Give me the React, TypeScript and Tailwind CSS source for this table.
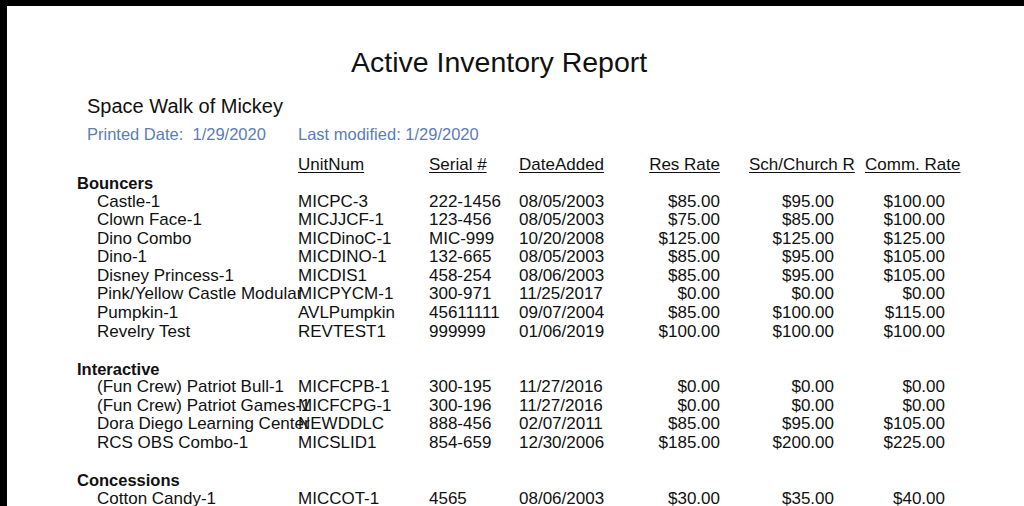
import React from "react";

type Row = [string, string, string, string, string, string, string];

const groups: { name: string; rows: Row[] }[] = [
  {
    name: "Bouncers",
    rows: [
      ["Castle-1", "MICPC-3", "222-1456", "08/05/2003", "$85.00", "$95.00", "$100.00"],
      ["Clown Face-1", "MICJJCF-1", "123-456", "08/05/2003", "$75.00", "$85.00", "$100.00"],
      ["Dino Combo", "MICDinoC-1", "MIC-999", "10/20/2008", "$125.00", "$125.00", "$125.00"],
      ["Dino-1", "MICDINO-1", "132-665", "08/05/2003", "$85.00", "$95.00", "$105.00"],
      ["Disney Princess-1", "MICDIS1", "458-254", "08/06/2003", "$85.00", "$95.00", "$105.00"],
      ["Pink/Yellow Castle Modular", "MICPYCM-1", "300-971", "11/25/2017", "$0.00", "$0.00", "$0.00"],
      ["Pumpkin-1", "AVLPumpkin", "45611111", "09/07/2004", "$85.00", "$100.00", "$115.00"],
      ["Revelry Test", "REVTEST1", "999999", "01/06/2019", "$100.00", "$100.00", "$100.00"],
    ],
  },
  {
    name: "Interactive",
    rows: [
      ["(Fun Crew) Patriot Bull-1", "MICFCPB-1", "300-195", "11/27/2016", "$0.00", "$0.00", "$0.00"],
      ["(Fun Crew) Patriot Games-1", "MICFCPG-1", "300-196", "11/27/2016", "$0.00", "$0.00", "$0.00"],
      ["Dora Diego Learning Center", "NEWDDLC", "888-456", "02/07/2011", "$85.00", "$95.00", "$105.00"],
      ["RCS OBS Combo-1", "MICSLID1", "854-659", "12/30/2006", "$185.00", "$200.00", "$225.00"],
    ],
  },
  {
    name: "Concessions",
    rows: [
      ["Cotton Candy-1", "MICCOT-1", "4565", "08/06/2003", "$30.00", "$35.00", "$40.00"],
    ],
  },
];

const grid =
  "grid grid-cols-[20px_201px_131px_90px_101px_100px_114px_111px] pl-[70px] text-[17px] leading-[18.57px] whitespace-nowrap";

function ItemRow({ r }: { r: Row }) {
  return (
    <div className={grid}>
      <div />
      <div>{r[0]}</div>
      <div>{r[1]}</div>
      <div>{r[2]}</div>
      <div>{r[3]}</div>
      <div className="text-right">{r[4]}</div>
      <div className="text-right">{r[5]}</div>
      <div className="text-right">{r[6]}</div>
    </div>
  );
}

export default function App() {
  return (
    <div className="w-[1024px] h-[506px] overflow-hidden bg-black pt-[6px] pl-[7px]">
      <div
        className="h-full bg-white text-[#111111]"
        style={{ fontFamily: '"Liberation Sans", Arial, sans-serif' }}
      >
        <div className="pt-[40px] pl-[344px] text-[28.5px] leading-[32px] whitespace-nowrap">
          Active Inventory Report
        </div>
        <div className="mt-[16px] pl-[80px] text-[20px] leading-[24px]">Space Walk of Mickey</div>
        <div className="mt-[6px] pl-[80px] flex text-[16.5px] leading-[20px] text-[#5a7db5] whitespace-pre">
          <span className="w-[211px]">Printed Date:  1/29/2020</span>
          <span>Last modified: 1/29/2020</span>
        </div>
        <div className={grid + " mt-[11.5px]"}>
          <div />
          <div />
          <div className="underline underline-offset-[2px]">UnitNum</div>
          <div className="underline underline-offset-[2px]">Serial #</div>
          <div className="underline underline-offset-[2px]">DateAdded</div>
          <div className="text-right">
            <span className="underline underline-offset-[2px]">Res Rate</span>
          </div>
          <div className="pl-[29px]">
            <span className="underline underline-offset-[2px]">Sch/Church R</span>
          </div>
          <div className="pl-[31px]">
            <span className="underline underline-offset-[2px]">Comm. Rate</span>
          </div>
        </div>
        {groups.map((g, gi) => (
          <div key={g.name}>
            {gi > 0 && <div className="h-[18.57px]" />}
            <div className="pl-[70px] text-[16.5px] leading-[18.57px] font-bold">{g.name}</div>
            {g.rows.map((r) => (
              <ItemRow key={r[0]} r={r} />
            ))}
          </div>
        ))}
      </div>
    </div>
  );
}
